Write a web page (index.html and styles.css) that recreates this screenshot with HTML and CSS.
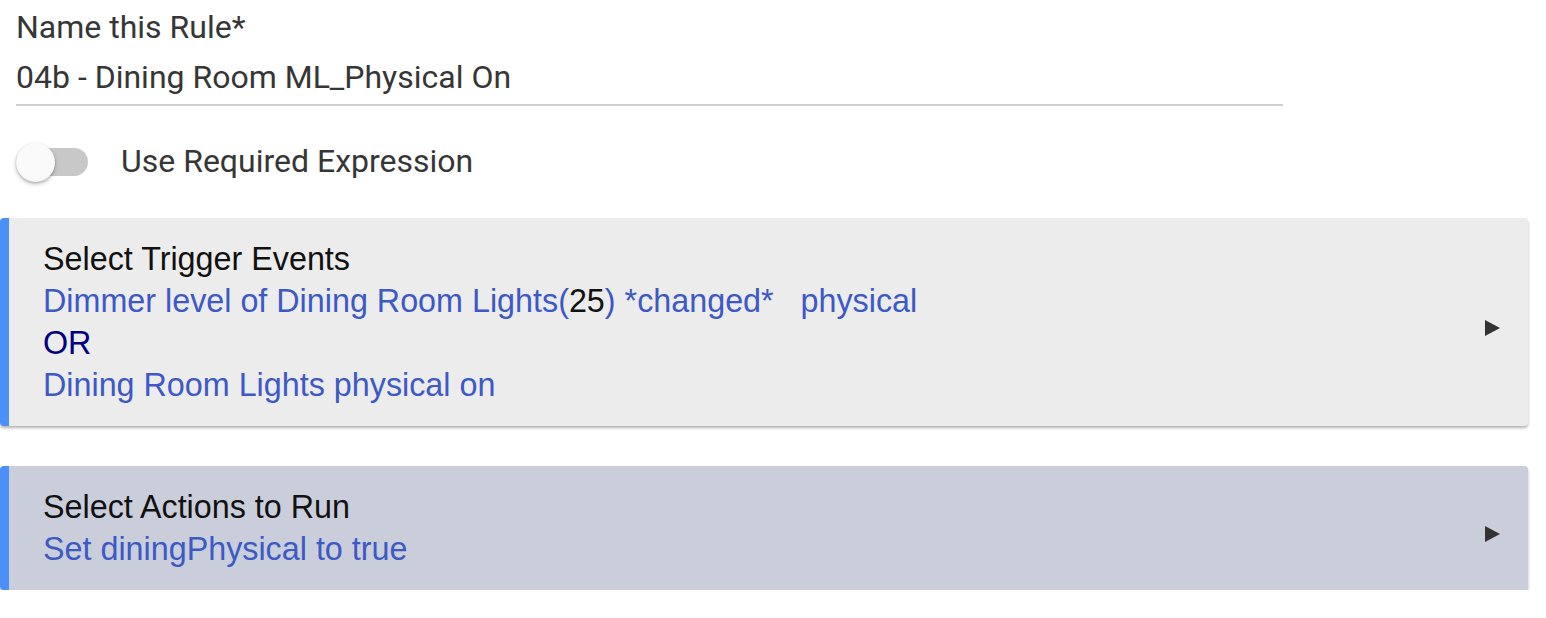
FILE: index.html
```html
<!DOCTYPE html>
<html>
<head>
<meta charset="utf-8">
<link rel="stylesheet" href="styles.css">
</head>
<body>
<div class="page">
  <div class="field">
    <div class="field-label">Name this Rule*</div>
    <div class="field-input">04b - Dining Room ML_Physical On</div>
  </div>
  <div class="toggle-row">
    <div class="toggle"><div class="toggle-track"></div><div class="toggle-knob"></div></div>
    <div class="toggle-label">Use Required Expression</div>
  </div>
  <div class="card card-trigger">
    <div class="card-body">
      <div class="card-title">Select Trigger Events</div>
      <div class="card-line link">Dimmer level of Dining Room Lights(<span class="num">25</span>) *changed*&nbsp;&nbsp; physical</div>
      <div class="card-line or">OR</div>
      <div class="card-line link">Dining Room Lights physical on</div>
    </div>
    <div class="card-arrow"></div>
  </div>
  <div class="card card-actions">
    <div class="card-body">
      <div class="card-title">Select Actions to Run</div>
      <div class="card-line link">Set diningPhysical to true</div>
    </div>
    <div class="card-arrow"></div>
  </div>
</div>
</body>
</html>
```

FILE: styles.css
```css
html, body {
  margin: 0;
  padding: 0;
  background: #ffffff;
}
.page {
  display: flex;
  flex-direction: column;
  width: 1528px;
}
.field {
  margin-left: 16px;
  width: 1267px;
  margin-top: 10px;
  font-family: Roboto, "Liberation Sans", sans-serif;
  font-size: 32px;
  color: #363636;
}
.field-label {
  line-height: 34px;
}
.field-input {
  margin-top: 16px;
  line-height: 34px;
  padding-bottom: 10px;
  border-bottom: 2px solid #cfcfcf;
}
.toggle-row {
  display: flex;
  align-items: center;
  margin-top: 36px;
  height: 40px;
  margin-left: 16px;
}
.toggle {
  position: relative;
  width: 72px;
  height: 40px;
  display: flex;
  align-items: center;
}
.toggle-track {
  width: 72px;
  height: 28px;
  border-radius: 14px;
  background: #c8c8c8;
}
.toggle-knob {
  position: absolute;
  left: 0;
  top: 1px;
  width: 39px;
  height: 39px;
  border-radius: 50%;
  background: #fafafa;
  box-shadow: 0 2px 4px rgba(0,0,0,0.25), 0 1px 2px rgba(0,0,0,0.15);
}
.toggle-label {
  margin-left: 33px;
  margin-top: -3px;
  font-family: Roboto, "Liberation Sans", sans-serif;
  font-size: 32px;
  color: #363636;
}
.card {
  display: flex;
  align-items: center;
  border-left: 9px solid #4a90f7;
  border-radius: 4px;
  box-shadow: 0 2px 3px rgba(0,0,0,0.3);
  font-family: "Liberation Sans", Arial, sans-serif;
  font-size: 32.3px;
}
.card-trigger {
  margin-top: 36px;
  background: #ececec;
}
.card-actions {
  margin-top: 40px;
  background: #cacedb;
}
.card-body {
  flex: 1;
  padding: 20px 0 20px 34px;
}
.card-title, .card-line {
  line-height: 42px;
  white-space: pre;
}
.card-title {
  color: #111111;
}
.link {
  color: #3c59c6;
}
.num {
  color: #111111;
}
.or {
  color: #000080;
}
.card-arrow {
  width: 0;
  height: 0;
  border-top: 8px solid transparent;
  border-bottom: 8px solid transparent;
  border-left: 15px solid #333333;
  margin-right: 28px;
  margin-top: 12px;
}
```
